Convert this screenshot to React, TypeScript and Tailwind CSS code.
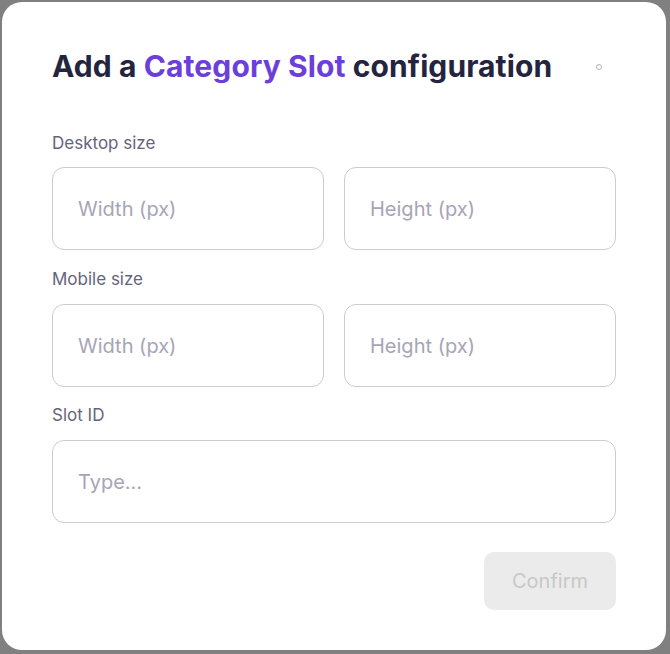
export default function App() {
  const font = { fontFamily: 'Inter, "Noto Sans", sans-serif' };

  return (
    <div className="h-[654px] w-[670px] bg-[#808080] pl-[2px] pt-[2px]" style={font}>
      <div className="relative flex h-[648px] w-[664px] flex-col rounded-[20px] bg-white px-[50px] pt-[46px]">
        {/* Title */}
        <div className="flex items-center justify-between">
          <h1 className="text-[30px] font-bold leading-[36px] tracking-[0.1px] text-[#25243f]">
            Add a <span className="text-[#6b3fdc]">Category Slot</span> configuration
          </h1>
          <span className="mr-[14px] mt-[1px] h-[6px] w-[6px] rounded-full border border-[#b5b5b5]" />
        </div>

        {/* Desktop size */}
        <label className="mt-[47px] text-[17px] leading-[24px] text-[#65647a]">Desktop size</label>
        <div className="mt-[12px] grid grid-cols-2 gap-[20px]">
          <Field placeholder="Width (px)" />
          <Field placeholder="Height (px)" />
        </div>

        {/* Mobile size */}
        <label className="mt-[17px] text-[17px] leading-[24px] text-[#65647a]">Mobile size</label>
        <div className="mt-[13px] grid grid-cols-2 gap-[20px]">
          <Field placeholder="Width (px)" />
          <Field placeholder="Height (px)" />
        </div>

        {/* Slot ID */}
        <label className="mt-[16px] text-[17px] leading-[24px] text-[#65647a]">Slot ID</label>
        <div className="mt-[13px]">
          <Field placeholder="Type..." />
        </div>

        <div className="mt-[29px] flex justify-end">
          <button
            disabled
            className="h-[58px] w-[132px] rounded-[10px] bg-[#ebebeb] text-[20px] text-[#c8c8c8]"
          >
            Confirm
          </button>
        </div>
      </div>
    </div>
  );
}

function Field({ placeholder }: { placeholder: string }) {
  return (
    <input
      placeholder={placeholder}
      className="h-[83px] w-full rounded-[12px] border border-[#cbcbd0] bg-white px-[25px] text-[20px] text-[#25243f] outline-none placeholder:text-[#a6a5b6]"
    />
  );
}
